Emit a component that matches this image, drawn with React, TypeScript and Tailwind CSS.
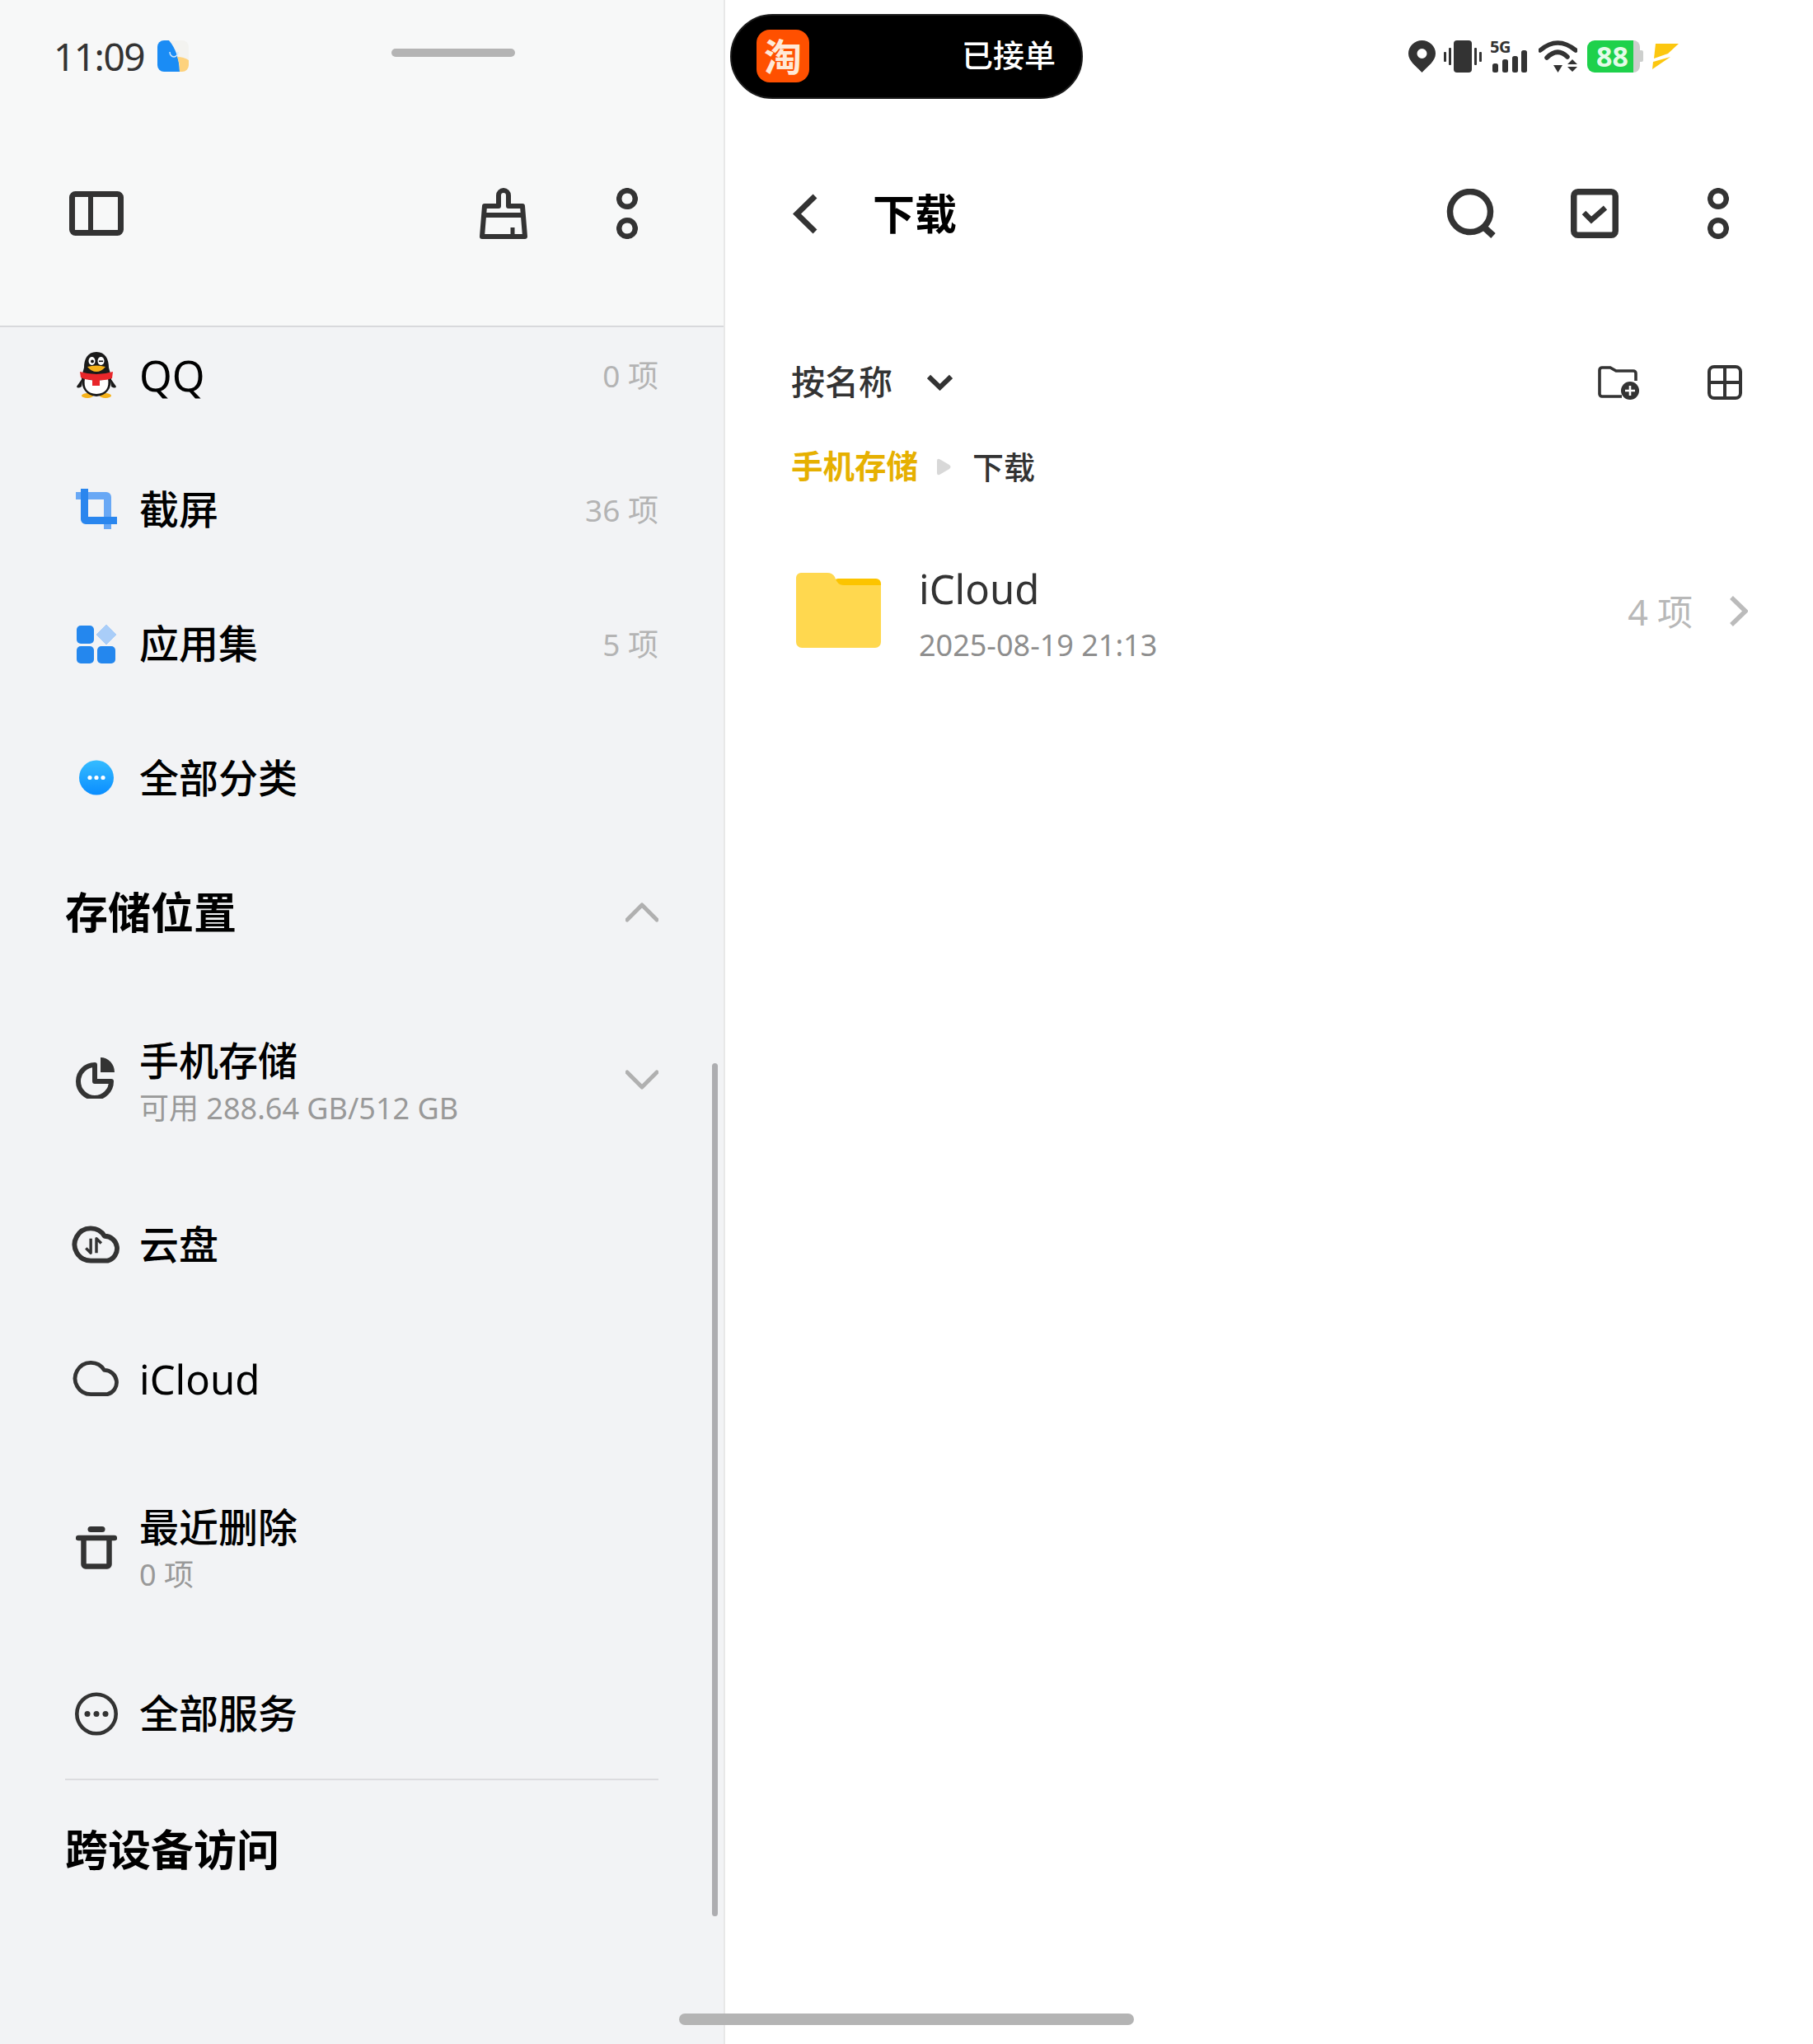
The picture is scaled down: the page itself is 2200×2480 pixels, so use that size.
import type { ReactNode } from "react";

// --- small icons, drawn at the size they have in the screenshot ---
function RingDots() {
  return (
    <svg width="26" height="62" viewBox="0 0 26 62" fill="none" stroke="#333" strokeWidth="6.5">
      <circle cx="13" cy="13" r="9.8" />
      <circle cx="13" cy="49" r="9.8" />
    </svg>
  );
}

function CloudShape({ width = 60, height = 46, sw = 6, children }: { width?: number; height?: number; sw?: number; children?: ReactNode }) {
  return (
    <svg width={width} height={height} viewBox="0 0 60 47" fill="none" stroke="#333" strokeWidth={sw} strokeLinejoin="round">
      <path d="M23 43.5A20 20 0 1 1 40 13A15.5 15.5 0 0 1 44 43.5Z" />
      {children}
    </svg>
  );
}

function QQIcon() {
  return (
    <svg width="48" height="56" viewBox="0 0 48 56">
      <ellipse cx="13" cy="53" rx="7" ry="3" fill="#f6b21a" />
      <ellipse cx="35" cy="53" rx="7" ry="3" fill="#f6b21a" />
      <path d="M7 32 L0 42 Q1 45 6 42Z M41 32 L48 42 Q47 45 42 42Z" fill="#1a1a1a" />
      <path d="M24 0C13 0 9 9 9 19L6 30Q5 52 24 54Q43 52 42 30L39 19C39 9 35 0 24 0Z" fill="#1a1a1a" />
      <path d="M10 32Q24 38 38 32Q41 50 24 51Q7 50 10 32Z" fill="#fff" />
      <path d="M4 24Q24 30 44 24L43 32Q34 35 28 34V41H19V34Q10 34 5 31Z" fill="#e8262a" />
      <ellipse cx="18.5" cy="11" rx="4" ry="5" fill="#fff" />
      <ellipse cx="29.5" cy="11" rx="4" ry="5" fill="#fff" />
      <circle cx="19" cy="11.5" r="2" fill="#111" />
      <rect x="27" y="10.5" width="5" height="1.6" fill="#111" />
      <path d="M13 18Q24 15 35 18Q30 24 24 24Q18 24 13 18Z" fill="#f6b21a" />
    </svg>
  );
}

function CropIcon() {
  return (
    <svg width="50" height="49" viewBox="0 0 50 49">
      <path d="M0 4H37a6 6 0 0 1 6 6V49H34V13H0Z" fill="#69a8f5" />
      <path d="M6 0H15V34H50V43H12a6 6 0 0 1-6-6Z" fill="#2a86ee" />
    </svg>
  );
}

function AppsIcon() {
  return (
    <svg width="48" height="48" viewBox="0 0 48 48">
      <rect x="0" y="2" width="21" height="22" rx="5" fill="#2487ee" />
      <rect x="0" y="27" width="21" height="21" rx="5" fill="#2487ee" />
      <rect x="25" y="27" width="22" height="21" rx="5" fill="#2487ee" />
      <path d="M36 1L48 13L36 25L24 13Z" fill="#a9cdf8" stroke="#a9cdf8" strokeWidth="1" strokeLinejoin="round" />
    </svg>
  );
}

function MoreBlueIcon() {
  return (
    <svg width="42" height="43" viewBox="0 0 42 43">
      <defs>
        <linearGradient id="moreBlue" x1="0" y1="0" x2="0" y2="1">
          <stop offset="0" stopColor="#35bcff" />
          <stop offset="1" stopColor="#0a8dff" />
        </linearGradient>
      </defs>
      <circle cx="21" cy="21.5" r="21" fill="url(#moreBlue)" />
      <circle cx="13" cy="21.5" r="2.6" fill="#fff" />
      <circle cx="21" cy="21.5" r="2.6" fill="#fff" />
      <circle cx="29" cy="21.5" r="2.6" fill="#fff" />
    </svg>
  );
}

function PieIcon() {
  return (
    <svg className="mb-[8px] mr-[4px]" width="48" height="50" viewBox="0 0 48 50" fill="none" stroke="#333" strokeWidth="6">
      <path d="M24 9A20 20 0 1 0 44 29H24Z" strokeLinejoin="round" />
      <path d="M31 0A17 18 0 0 1 48 18H31Z" fill="#333" stroke="none" />
    </svg>
  );
}

function TrashIcon() {
  return (
    <svg width="50" height="52" viewBox="0 0 50 52" fill="none" stroke="#333">
      <path d="M18 3.5H32" strokeWidth="7" strokeLinecap="round" />
      <path d="M3 14H47" strokeWidth="6.5" strokeLinecap="round" />
      <path d="M9.5 14V46a2.5 2.5 0 0 0 2.5 2.5H38a2.5 2.5 0 0 0 2.5-2.5V14" strokeWidth="6.5" />
    </svg>
  );
}

function MoreRingIcon() {
  return (
    <svg width="52" height="53" viewBox="0 0 52 53" fill="none">
      <circle cx="26" cy="26.5" r="23.7" stroke="#333" strokeWidth="4.6" />
      <circle cx="15" cy="26.5" r="3.5" fill="#333" />
      <circle cx="26" cy="26.5" r="3.5" fill="#333" />
      <circle cx="37" cy="26.5" r="3.5" fill="#333" />
    </svg>
  );
}

function StatusIcons() {
  return (
    <div className="ml-auto mr-[163px] flex items-center">
      <svg width="33" height="39" viewBox="0 0 33 39">
        <path fillRule="evenodd" d="M16.5 39C9 31 0 25 0 16a16.5 16 0 0 1 33 0C33 25 24 31 16.5 39ZM16.5 10a6 6 0 1 0 0 12a6 6 0 0 0 0-12Z" fill="#333" />
      </svg>
      <svg className="ml-[10px]" width="46" height="39" viewBox="0 0 46 39" fill="#333">
        <rect x="12" y="0" width="22" height="39" rx="4" />
        <rect x="0" y="14" width="3" height="12" rx="1" />
        <rect x="6" y="9" width="3" height="21" rx="1" />
        <rect x="37" y="9" width="3" height="21" rx="1" />
        <rect x="43" y="14" width="3" height="12" rx="1" />
      </svg>
      <svg className="ml-[11px]" width="45" height="39" viewBox="0 0 45 39" fill="#333">
        <text x="-1" y="15" fontFamily="'Noto Sans', sans-serif" fontWeight="700" fontSize="20" letterSpacing="-0.5">5G</text>
        <rect x="2" y="28" width="7" height="11" rx="2.5" />
        <rect x="14" y="23" width="7" height="16" rx="2.5" />
        <rect x="26" y="19" width="7" height="20" rx="2.5" />
        <rect x="37" y="12" width="7" height="27" rx="2.5" />
      </svg>
      <svg className="ml-[13px]" width="47" height="39" viewBox="0 0 47 39" fill="none" stroke="#333">
        <path d="M2 12Q23 -6 45 12" strokeWidth="5.5" strokeLinecap="round" />
        <path d="M10 21Q23 8 35 20" strokeWidth="5.5" strokeLinecap="round" />
        <path d="M18 30H29L23.5 39Z" fill="#333" stroke="none" />
        <path d="M38 23L44 29H32Z M32 32H44L38 38Z" fill="#333" stroke="none" transform="translate(3 0)" />
      </svg>
      <div className="ml-[12px] flex items-center">
        <div className="flex h-[39px] w-[56px] items-center justify-center rounded-l-[9px] bg-[#1ed14b] pl-[5px] text-[34px] font-bold text-[#e4fbe9]">88</div>
        <div className="h-[39px] w-[8px] rounded-r-[8px] bg-[#cdcfcd]" />
        <div className="h-[14px] w-[4px] rounded-r-[2px] bg-[#cdcfcd]" />
      </div>
      <svg className="ml-[10px]" width="33" height="31" viewBox="0 0 33 31" fill="#fcc70f">
        <path d="M5 0H33L20 12L3 18Z" />
        <path d="M2 22L23 16L1 31Z" />
      </svg>
    </div>
  );
}

// --- rows of the side panel ---
function Row({ icon, label, count, sub, className, chevron, labelClass = "text-[48px] font-medium" }: { icon: ReactNode; label: string; count?: string; sub?: string; className: string; chevron?: boolean; labelClass?: string }) {
  return (
    <div className={`flex items-center pl-[85px] pr-[79px] ${className}`}>
      <div className="flex w-[64px] shrink-0 justify-center">{icon}</div>
      <div className="ml-[20px] min-w-0 flex-1">
        <div className={`leading-[58px] text-black ${labelClass}`}>{label}</div>
        {sub && <div className="mt-[7px] text-[36px] leading-[44px] text-[#999]">{sub}</div>}
      </div>
      {count && <div className="pt-[2px] text-[37px] text-[#b4b4b4]">{count}</div>}
      {chevron && (
        <svg className="mb-[4px]" width="40" height="24" viewBox="0 0 40 24" fill="none" stroke="#b0b0b0" strokeWidth="5" strokeLinecap="round" strokeLinejoin="round">
          <path d="M2 3L20 21L38 3" />
        </svg>
      )}
    </div>
  );
}

export default function App() {
  return (
    <div className="relative flex h-[2480px] w-[2200px] overflow-hidden bg-white font-['Noto_Sans','Noto_Sans_CJK_SC',sans-serif]">
      {/* left panel */}
      <div className="flex w-[880px] shrink-0 flex-col border-r-2 border-[#e8e8e8] bg-[#f2f3f5]">
        <div className="h-[397px] shrink-0 border-b-2 border-[#d8d9dc] bg-[#f7f8f8]">
          <div className="flex h-[136px] items-center pl-[65px]">
            <span className="w-[108px] whitespace-nowrap text-[46px] tracking-[-1.5px] text-[#333]">11:09</span>
            <svg className="ml-[18px]" width="38" height="38" viewBox="0 0 38 38">
              <rect width="38" height="38" rx="8" fill="#f3f3f0" />
              <path d="M0 8a8 8 0 0 1 8-8H14Q26 14 27 38H8a8 8 0 0 1-8-8Z" fill="#1a8cf5" />
              <path d="M27 38Q27 26 24 20Q32 20 38 24V30a8 8 0 0 1-8 8Z" fill="#fdd27d" />
              <path d="M15 14a5 6 0 0 0 10 0" fill="none" stroke="#cfe6fb" strokeWidth="1.5" />
            </svg>
            <div className="mb-[8px] ml-[246px] h-[10px] w-[150px] rounded-full bg-[#b4b4b4]" />
          </div>
          <div className="flex h-[246px] items-center pl-[84px] pr-[104px]">
            <svg width="66" height="54" viewBox="0 0 66 54" fill="none" stroke="#333">
              <rect x="3.500" y="3.500" width="59" height="47" rx="4" strokeWidth="7" />
              <path d="M26 3V51" strokeWidth="6" />
            </svg>
            <svg className="ml-auto" width="58" height="62" viewBox="0 0 58 62" fill="none" stroke="#333" strokeWidth="6" strokeLinejoin="round">
              <path d="M23 22V9a6 6 0 0 1 12 0V22H52L55 59H3L6 22Z" />
              <path d="M6 33H52" />
              <path d="M40 48V57" strokeWidth="5" />
            </svg>
            <div className="ml-[108px]">
              <RingDots />
            </div>
          </div>
        </div>

        <div className="min-h-0 flex-1 overflow-hidden">
          <div className="-mt-[24px]">
            <Row className="h-[163px]" icon={<QQIcon />} label="QQ" count="0 项" labelClass="text-[51px] font-normal" />
            <Row className="h-[163px]" icon={<CropIcon />} label="截屏" count="36 项" />
            <Row className="h-[163px]" icon={<AppsIcon />} label="应用集" count="5 项" />
            <Row className="h-[163px]" icon={<MoreBlueIcon />} label="全部分类" />
            <div className="flex h-[163px] items-center justify-between pl-[79px] pr-[79px]">
              <h2 className="text-[52px] font-bold text-black">存储位置</h2>
              <svg width="40" height="24" viewBox="0 0 40 24" fill="none" stroke="#b0b0b0" strokeWidth="5" strokeLinecap="round" strokeLinejoin="round">
                <path d="M2 21L20 3L38 21" />
              </svg>
            </div>
            <Row className="mt-[8px] h-[232px]" icon={<PieIcon />} label="手机存储" sub="可用 288.64 GB/512 GB" chevron />
            <Row className="h-[163px]" icon={<CloudShape><path d="M23 16V34L17 28" strokeWidth="3.5" /><path d="M30 34V16L36 22" strokeWidth="3.5" /></CloudShape>} label="云盘" />
            <Row className="h-[163px]" icon={<CloudShape width={58} height={45} sw={5} />} label="iCloud" labelClass="text-[49px] font-normal" />
            <Row className="h-[248px]" icon={<TrashIcon />} label="最近删除" sub="0 项" />
            <Row className="h-[154px]" icon={<MoreRingIcon />} label="全部服务" />
            <div className="mx-[79px] mt-[2px] h-[2px] bg-[#dcdcdf]" />
            <div className="flex h-[168px] items-center pl-[79px]">
              <h2 className="text-[52px] font-bold text-black">跨设备访问</h2>
            </div>
          </div>
        </div>
      </div>

      {/* right panel */}
      <div className="min-w-0 flex-1">
        <div className="flex h-[136px] items-center">
          <div className="ml-[6px] flex h-[103px] w-[428px] items-center justify-between rounded-full border-2 border-[#1c1c1c] bg-black pl-[30px] pr-[31px]">
            <div className="flex h-[64px] w-[64px] items-center justify-center rounded-[16px] bg-[#ff5000] text-[46px] font-bold leading-none text-[#ffe9d8]">淘</div>
            <span className="pb-[3px] text-[38px] font-medium text-white">已接单</span>
          </div>
          <StatusIcons />
        </div>

        <div className="flex h-[246px] items-center pl-[82px] pr-[102px]">
          <svg width="30" height="49" viewBox="0 0 30 49" fill="none" stroke="#333" strokeWidth="7">
            <path d="M27 3L5 24.500L27 46" />
          </svg>
          <h1 className="ml-[67px] text-[51px] font-bold text-black">下载</h1>
          <svg className="ml-auto" width="60" height="60" viewBox="0 0 60 60" fill="none" stroke="#333" strokeWidth="7.5">
            <circle cx="29" cy="28" r="24.500" />
            <path d="M45 46L57 57" strokeWidth="8" />
          </svg>
          <svg className="ml-[91px]" width="58" height="60" viewBox="0 0 58 60" fill="none" stroke="#333">
            <rect x="3.750" y="3.750" width="50.500" height="52.500" rx="5" strokeWidth="7.500" />
            <path d="M16 29L25 38L42 23" strokeWidth="6.500" />
          </svg>
          <div className="ml-[108px]">
            <RingDots />
          </div>
        </div>

        <div className="mt-[40px] flex h-[84px] items-center pl-[80px] pr-[86px]">
          <span className="text-[41px] font-medium text-[#333]">按名称</span>
          <svg className="ml-[42px]" width="31" height="20" viewBox="0 0 31 20" fill="none" stroke="#333" strokeWidth="6">
            <path d="M2 3L15.500 16L29 3" />
          </svg>
          <svg className="ml-auto" width="50" height="41" viewBox="0 0 50 41" fill="none" stroke="#333" strokeWidth="3.6">
            <path d="M29 37H5a3 3 0 0 1-3-3V5a3 3 0 0 1 3-3H15L22 6H43a3 3 0 0 1 3 3V18" />
            <circle cx="39" cy="30" r="11" fill="#333" stroke="none" />
            <path d="M33 30H45M39 24V36" stroke="#fff" strokeWidth="2.600" />
          </svg>
          <svg className="ml-[83px]" width="42" height="42" viewBox="0 0 42 42" fill="none" stroke="#333" strokeWidth="4">
            <rect x="2" y="2" width="38" height="38" rx="6" />
            <path d="M21 2V40M2 21H40" />
          </svg>
        </div>

        <div className="mt-[20px] flex h-[80px] items-center pl-[80px]">
          <span className="text-[38.500px] font-bold text-[#e6b000]">手机存储</span>
          <svg className="ml-[23px]" width="17" height="21" viewBox="0 0 17 21">
            <path d="M0 3Q0 0 3 1L15 8Q18 10.500 15 13L3 20Q0 21 0 18Z" fill="#d8d8d8" />
          </svg>
          <span className="ml-[26px] text-[38px] font-medium text-[#333]">下载</span>
        </div>

        <div className="mt-[45px] flex h-[180px] items-center pl-[86px] pr-[79px]">
          <svg width="103" height="92" viewBox="0 0 103 92">
            <rect x="45" y="7" width="58" height="30" rx="6" fill="#fcc400" />
            <path d="M6 0H38Q44 0 47 5Q50 15 58 15H103V84a7 7 0 0 1-7 7H7a7 7 0 0 1-7-7V6a6 6 0 0 1 6-6Z" fill="#ffd84f" />
          </svg>
          <div className="ml-[46px] flex-1 pt-[8px]">
            <div className="text-[49px] leading-[64px] text-[#333]">iCloud</div>
            <div className="mt-[11px] text-[36px] leading-[52px] text-[#8e8e8e]">2025-08-19 21:13</div>
          </div>
          <span className="pt-[5px] text-[43px] text-[#b8b8b8]">4 项</span>
          <svg className="ml-[44px]" width="23" height="39" viewBox="0 0 23 39" fill="none" stroke="#bbb" strokeWidth="5.500">
            <path d="M3 3L20 19.500L3 36" />
          </svg>
        </div>
      </div>

      {/* scrollbar + gesture bar lie over the panels */}
      <div className="absolute left-[864px] top-[1290px] h-[1035px] w-[7px] rounded-full bg-[#adadb0]" />
      <div className="absolute left-[824px] top-[2443px] h-[14px] w-[552px] rounded-full bg-[#b4b4b4]" />
    </div>
  );
}
